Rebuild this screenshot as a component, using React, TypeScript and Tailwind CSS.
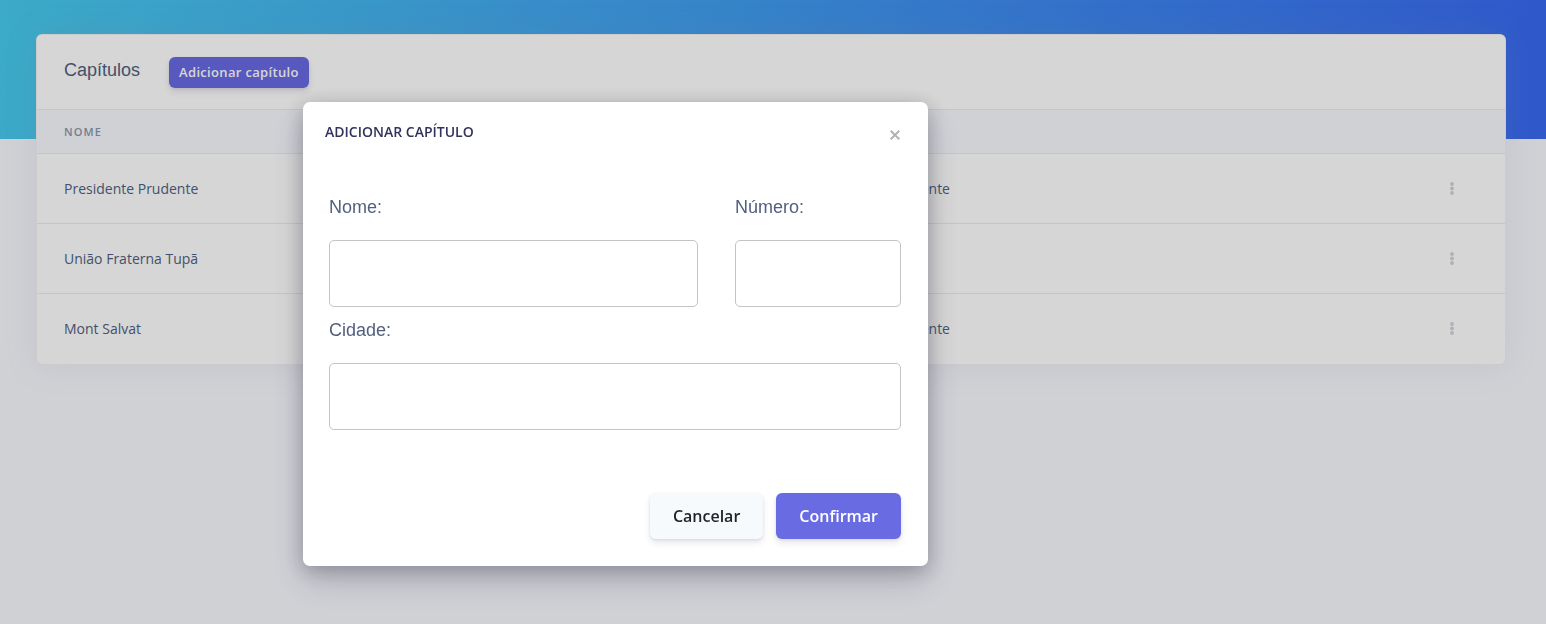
import React from "react";

const chapters = [
  { name: "Presidente Prudente", city: "Presidente Prudente" },
  { name: "União Fraterna Tupã", city: "Tupã" },
  { name: "Mont Salvat", city: "Presidente Prudente" },
];

const fieldClass =
  "h-[67px] w-full rounded-[5px] border border-[#c4c4c4] bg-white px-4 font-['Open_Sans',sans-serif] text-base text-[#525f7f] outline-none";
const labelClass =
  "mb-5 block font-['Liberation_Sans',Arial,sans-serif] text-[18px] leading-[26px] text-[#525f7f]";
const buttonShadow =
  "shadow-[0_4px_6px_rgba(50,50,93,0.11),0_1px_3px_rgba(0,0,0,0.08)]";

function MoreIcon() {
  return (
    <svg viewBox="0 0 4 13" className="h-[13px] w-1" fill="#ced4da" aria-hidden="true">
      <circle cx="2" cy="2" r="1.9" />
      <circle cx="2" cy="6.5" r="1.9" />
      <circle cx="2" cy="11" r="1.9" />
    </svg>
  );
}

function ChapterTable() {
  return (
    <section className="rounded-md border border-black/5 bg-white pb-px shadow-[0_0_32px_rgba(136,152,170,0.15)]">
      <header className="flex h-[74px] items-start gap-[29px] px-[27px] pt-[22px]">
        <h1 className="font-['Liberation_Sans',Arial,sans-serif] text-[18px] leading-[26px] text-[#525f7f]">
          Capítulos
        </h1>
        <button
          type="button"
          className={`h-[31px] rounded-md bg-[#696be3] px-[10px] text-[13px] font-semibold tracking-wide text-white ${buttonShadow}`}
        >
          Adicionar capítulo
        </button>
      </header>
      <table className="w-full table-fixed border-separate border-spacing-0 text-left">
        <thead>
          <tr className="h-[44px] text-[11px] text-[#8898aa]">
            <th scope="col" className="w-[51%] border-t border-[#e9ecef] bg-[#f8f9fe] px-[27px] pt-[2px] font-semibold tracking-widest">
              NOME
            </th>
            <td className="w-[39%] border-t border-[#e9ecef] bg-[#f8f9fe]" />
            <td className="border-t border-[#e9ecef] bg-[#f8f9fe]" />
          </tr>
        </thead>
        <tbody className="text-[14px] text-[#525f7f]">
          {chapters.map((chapter) => (
            <tr key={chapter.name} className="h-[70px]">
              <td className="border-t border-[#e9ecef] px-[27px]">{chapter.name}</td>
              <td className="border-t border-[#e9ecef] px-[30px]">{chapter.city}</td>
              <td className="border-t border-[#e9ecef] pr-[42px] text-right">
                <button type="button" aria-label="Opções" className="inline-flex h-8 w-[22px] items-center justify-center align-middle">
                  <MoreIcon />
                </button>
              </td>
            </tr>
          ))}
        </tbody>
      </table>
    </section>
  );
}

function AddChapterDialog() {
  return (
    <div className="fixed inset-0 overflow-hidden bg-black/16 pt-[102px] pl-[303px]">
      <div
        role="dialog"
        aria-modal="true"
        aria-labelledby="dialog-title"
        className="w-[625px] max-w-full rounded-[7px] bg-white shadow-[0_15px_35px_rgba(50,50,93,0.2),0_5px_20px_rgba(0,0,0,0.25)]"
      >
        <header className="flex items-start justify-between pt-5 pr-[27px] pl-[22px]">
          <h2 id="dialog-title" className="text-[14px] leading-5 font-semibold text-[#32325d]">
            ADICIONAR CAPÍTULO
          </h2>
          <button type="button" aria-label="Fechar" className="mt-[6px] flex size-[13px] items-center justify-center">
            <svg viewBox="0 0 10 10" className="size-[10px]" stroke="#b3b3b3" strokeWidth="2" aria-hidden="true">
              <path d="M.7.7 9.3 9.3M9.3.7.7 9.3" />
            </svg>
          </button>
        </header>
        <form className="pt-[52px] pr-[27px] pb-[27px] pl-[26px]">
          <div className="flex gap-[37px]">
            <div className="flex-1">
              <label htmlFor="name" className={labelClass}>Nome:</label>
              <input id="name" type="text" className={fieldClass} />
            </div>
            <div className="w-[166px]">
              <label htmlFor="number" className={labelClass}>Número:</label>
              <input id="number" type="text" className={fieldClass} />
            </div>
          </div>
          <div className="pt-[10px]">
            <label htmlFor="city" className={labelClass}>Cidade:</label>
            <input id="city" type="text" className={fieldClass} />
          </div>
          <div className="mt-[63px] flex justify-end gap-[13px]">
            <button
              type="button"
              className={`h-[46px] rounded-md bg-[#f7fafc] px-[23px] text-[16px] font-semibold text-[#212529] ${buttonShadow}`}
            >
              Cancelar
            </button>
            <button
              type="submit"
              className={`h-[46px] rounded-md bg-[#696be3] px-[23px] text-[16px] font-semibold text-white ${buttonShadow}`}
            >
              Confirmar
            </button>
          </div>
        </form>
      </div>
    </div>
  );
}

export default function App() {
  return (
    <div className="min-h-screen bg-[#f8f9fe] font-['Open_Sans',sans-serif]">
      <div className="h-[139px] bg-linear-[97deg,#48cbef,#3969f2]" />
      <main className="-mt-[105px] pr-10 pl-9">
        <ChapterTable />
      </main>
      <AddChapterDialog />
    </div>
  );
}
